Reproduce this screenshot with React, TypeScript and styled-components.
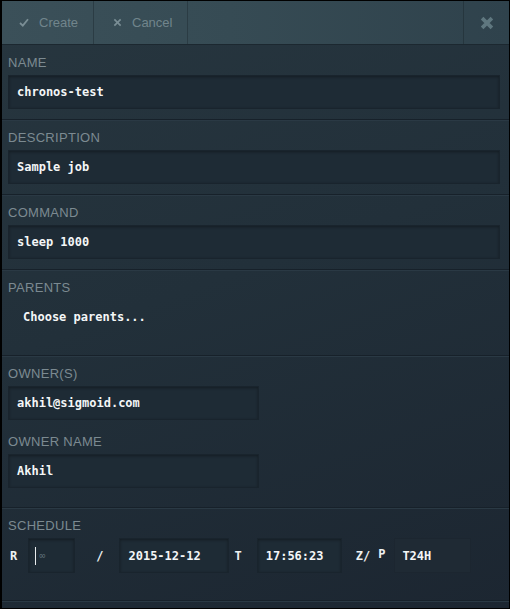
import React from "react";
import styled, { createGlobalStyle } from "styled-components";

const Global = createGlobalStyle`
  html, body { margin: 0; padding: 0; background: #000; }
  * { box-sizing: border-box; }
`;

const Frame = styled.div`
  width: 510px;
  height: 609px;
  border: 1px solid #000;
  border-left-width: 2px;
  background: linear-gradient(160deg, #27363f 0%, #22303a 45%, #1c2631 100%);
  display: flex;
  flex-direction: column;
  overflow: hidden;
  font-family: "Liberation Sans", Arial, sans-serif;
`;

const Toolbar = styled.div`
  height: 44px;
  flex: none;
  display: flex;
  align-items: stretch;
  background: linear-gradient(90deg, #3b5059 0%, #364b54 45%, #2f424c 100%);
  border-bottom: 1px solid #1c2830;
`;

const ToolButton = styled.div<{ $pl: number; $w: number }>`
  width: ${(p) => p.$w}px;
  padding-left: ${(p) => p.$pl}px;
  display: flex;
  align-items: center;
  gap: 10px;
  color: #71858c;
  font-size: 13px;
  border-right: 1px solid #2b3c44;
`;

const Spacer = styled.div`
  flex: 1;
`;

const CloseButton = styled.div`
  width: 46px;
  display: flex;
  align-items: center;
  justify-content: center;
  border-left: 1px solid #26363e;
`;

const Section = styled.div<{ $pb: number }>`
  flex: none;
  padding: 9px 9px ${(p) => p.$pb}px 6px;
  border-bottom: 1px solid #17212a;
  box-shadow: 0 1px 0 #2a3944;
`;

const Label = styled.div<{ $mt?: number }>`
  height: 18px;
  line-height: 18px;
  font-size: 13px;
  letter-spacing: 0.3px;
  color: #7c8a91;
  text-transform: uppercase;
  margin-top: ${(p) => p.$mt ?? 0}px;
  margin-bottom: 3px;
`;

const Field = styled.div<{ $w?: number }>`
  width: ${(p) => (p.$w ? `${p.$w}px` : "100%")};
  height: 34px;
  padding: 0 8px;
  display: flex;
  align-items: center;
  background: #1e2b35;
  border: 1px solid #19242d;
  box-shadow: inset 0 1px 3px rgba(0, 0, 0, 0.35);
  color: #f4f6f7;
  font-family: "DejaVu Sans Mono", monospace;
  font-weight: bold;
  font-size: 12px;
  white-space: nowrap;
`;

const Chooser = styled.div`
  height: 43px;
  padding: 8px 15px 0;
  line-height: 18px;
  color: #f4f6f7;
  font-family: "DejaVu Sans Mono", monospace;
  font-weight: bold;
  font-size: 12px;
`;

const ScheduleRow = styled.div`
  display: flex;
  align-items: center;
  height: 35px;
`;

const SchedField = styled(Field)<{ $w: number; $plain?: boolean; $pad?: number }>`
  flex: none;
  height: 35px;
  padding: 0 ${(p) => p.$pad ?? 8}px;
  background: ${(p) => (p.$plain ? "#1f2a34" : "#1e2b35")};
  border-color: ${(p) => (p.$plain ? "#1c2630" : "#19242d")};
  box-shadow: ${(p) => (p.$plain ? "none" : "inset 0 1px 3px rgba(0,0,0,0.35)")};
`;

const Sep = styled.span<{ $ml: number; $mr: number; $dy?: number }>`
  flex: none;
  margin-left: ${(p) => p.$ml}px;
  margin-right: ${(p) => p.$mr}px;
  color: #eef1f2;
  font-family: "DejaVu Sans Mono", monospace;
  font-weight: bold;
  font-size: 12px;
  position: relative;
  top: ${(p) => p.$dy ?? 0}px;
`;

const Caret = styled.span`
  display: inline-block;
  width: 1px;
  height: 18px;
  background: #e8ecee;
  margin-right: 3px;
`;

const Placeholder = styled.span`
  color: #5d6d75;
  font-weight: normal;
  font-size: 10px;
`;

const CheckIcon = () => (
  <svg width="10" height="9" viewBox="0 0 10 9">
    <path d="M1 5 L3.8 7.6 L9 1.2" fill="none" stroke="#7a8e95" strokeWidth="1.8" />
  </svg>
);

const CrossIcon = ({ size, color, w }: { size: number; color: string; w: number }) => (
  <svg width={size} height={size} viewBox="0 0 10 10">
    <path d="M1.5 1.5 L8.5 8.5 M8.5 1.5 L1.5 8.5" fill="none" stroke={color} strokeWidth={w} />
  </svg>
);

export default function App() {
  return (
    <>
      <Global />
      <Frame>
        <Toolbar>
          <ToolButton $pl={17} $w={92}>
            <CheckIcon />
            <span>Create</span>
          </ToolButton>
          <ToolButton $pl={19} $w={94}>
            <CrossIcon size={9} color="#7a8e95" w={1.8} />
            <span>Cancel</span>
          </ToolButton>
          <Spacer />
          <CloseButton>
            <CrossIcon size={14} color="#5f777f" w={2.6} />
          </CloseButton>
        </Toolbar>

        <Section $pb={10}>
          <Label>Name</Label>
          <Field>chronos-test</Field>
        </Section>
        <Section $pb={10}>
          <Label>Description</Label>
          <Field>Sample job</Field>
        </Section>
        <Section $pb={10}>
          <Label>Command</Label>
          <Field>sleep 1000</Field>
        </Section>
        <Section $pb={12}>
          <Label>Parents</Label>
          <Chooser>Choose parents...</Chooser>
        </Section>
        <Section $pb={19}>
          <Label>Owner(s)</Label>
          <Field $w={251}>akhil@sigmoid.com</Field>
          <Label $mt={13}>Owner name</Label>
          <Field $w={251}>Akhil</Field>
        </Section>
        <Section $pb={27}>
          <Label>Schedule</Label>
          <ScheduleRow>
            <Sep $ml={2} $mr={11}>R</Sep>
            <SchedField $w={47} $pad={6}>
              <Caret />
              <Placeholder>∞</Placeholder>
            </SchedField>
            <Sep $ml={21} $mr={16}>/</Sep>
            <SchedField $w={110}>2015-12-12</SchedField>
            <Sep $ml={5} $mr={15}>T</Sep>
            <SchedField $w={85}>17:56:23</SchedField>
            <Sep $ml={14} $mr={8}>Z/</Sep>
            <Sep $ml={0} $mr={9} $dy={-2}>P</Sep>
            <SchedField $w={77} $pad={7} $plain>T24H</SchedField>
          </ScheduleRow>
        </Section>
      </Frame>
    </>
  );
}
